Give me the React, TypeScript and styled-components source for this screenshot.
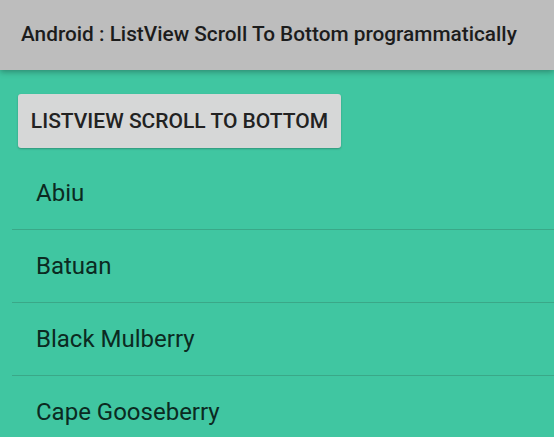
import React from "react";
import styled, { createGlobalStyle } from "styled-components";

const Global = createGlobalStyle`
  html, body { margin: 0; padding: 0; }
  body { background: #40c6a1; font-family: Roboto, "Noto Sans", sans-serif; overflow: hidden; }
`;

const Screen = styled.div`
  width: 554px;
  height: 437px;
  background: #40c6a1;
  display: flex;
  flex-direction: column;
  overflow: hidden;
`;

const AppBar = styled.header`
  height: 70px;
  flex: none;
  background: #bdbdbd;
  display: flex;
  align-items: center;
  padding-left: 21px;
  box-shadow: 0 2px 6px rgba(0, 0, 0, 0.3);
  position: relative;
  z-index: 1;
`;

const Title = styled.h1`
  margin: 0;
  font-family: Roboto, sans-serif;
  font-weight: 500;
  font-size: 20.8px;
  color: #1c1c1c;
  white-space: nowrap;
  padding-bottom: 2px;
`;

const Content = styled.main`
  display: flex;
  flex-direction: column;
  padding: 24px 0 0 12px;
`;

const Button = styled.button`
  align-self: flex-start;
  margin-left: 6px;
  width: 323px;
  height: 54px;
  border: none;
  border-radius: 3px;
  background: #d6d7d7;
  box-shadow: 0 1px 2px rgba(0, 0, 0, 0.25);
  font-family: Roboto, sans-serif;
  font-weight: 500;
  font-size: 21px;
  color: #222;
  padding: 0;
  display: flex;
  align-items: center;
  justify-content: center;
`;

const List = styled.ul`
  list-style: none;
  margin: 9px 0 0;
  padding: 0;
`;

const Item = styled.li`
  height: 72px;
  border-bottom: 1px solid #3aa888;
  display: flex;
  align-items: center;
  padding-left: 24px;
  font-family: Roboto, sans-serif;
  font-size: 24px;
  color: #0b2a21;
`;

const fruits = ["Abiu", "Batuan", "Black Mulberry", "Cape Gooseberry"];

export default function App() {
  return (
    <>
      <Global />
      <Screen>
        <AppBar>
          <Title>Android : ListView Scroll To Bottom programmatically</Title>
        </AppBar>
        <Content>
          <Button>LISTVIEW SCROLL TO BOTTOM</Button>
          <List>
            {fruits.map((f) => (
              <Item key={f}>{f}</Item>
            ))}
          </List>
        </Content>
      </Screen>
    </>
  );
}
